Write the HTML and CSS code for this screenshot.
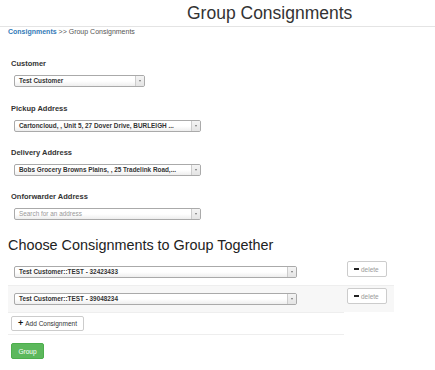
FILE: index.html
```html
<!DOCTYPE html>
<html>
<head>
<meta charset="utf-8">
<link rel="stylesheet" href="styles.css">
</head>
<body>
<div class="header"><h1 class="title">Group Consignments</h1></div>
<div class="crumbs"><a class="crumb-link">Consignments</a> &gt;&gt; Group Consignments</div>
<div class="main">
  <div class="field">
    <div class="label">Customer</div>
    <div class="sel w-short"><span class="sel-text">Test Customer</span><span class="sel-arrow"><i class="tri"></i></span></div>
  </div>
  <div class="field">
    <div class="label">Pickup Address</div>
    <div class="sel w-mid"><span class="sel-text">Cartoncloud, , Unit 5, 27 Dover Drive, BURLEIGH ...</span><span class="sel-arrow"><i class="tri"></i></span></div>
  </div>
  <div class="field">
    <div class="label">Delivery Address</div>
    <div class="sel w-mid"><span class="sel-text">Bobs Grocery Browns Plains, , 25 Tradelink Road,...</span><span class="sel-arrow"><i class="tri"></i></span></div>
  </div>
  <div class="field">
    <div class="label">Onforwarder Address</div>
    <div class="sel w-mid"><span class="sel-text placeholder">Search for an address</span><span class="sel-arrow"><i class="tri"></i></span></div>
  </div>
  <h2 class="heading">Choose Consignments to Group Together</h2>
  <div class="rows">
    <div class="row">
      <div class="cell-main"><div class="sel w-long"><span class="sel-text">Test Customer::TEST - 32423433</span><span class="sel-arrow"><i class="tri"></i></span></div></div>
      <div class="cell-act"><button class="btn btn-del"><i class="minus"></i>delete</button></div>
    </div>
    <div class="row striped">
      <div class="cell-main"><div class="sel w-long"><span class="sel-text">Test Customer::TEST - 39048234</span><span class="sel-arrow"><i class="tri"></i></span></div></div>
      <div class="cell-act"><button class="btn btn-del"><i class="minus"></i>delete</button></div>
    </div>
  </div>
  <div class="add-row"><button class="btn btn-add"><span class="plus">+</span>Add Consignment</button></div>
  <div class="actions"><button class="btn btn-group">Group</button></div>
</div>
</body>
</html>
```
FILE: styles.css
```css
* { box-sizing: border-box; }
body { margin: 0; font-family: "Liberation Sans", Arial, sans-serif; color: #333; background: #fff; }
.header { height: 27px; border-bottom: 1px solid #e4e4e4; padding-left: 187px; }
.title { margin: 0; font-size: 17.5px; font-weight: normal; line-height: 26px; color: #333; }
.crumbs { font-size: 7px; line-height: 9px; padding: 0 0 0 8px; margin-top: 0; color: #555; }
.crumb-link { color: #337ab7; font-weight: bold; }
.main { padding-left: 8px; }
.field { padding-left: 3px; margin-top: 16px; }
.field:first-child { margin-top: 23px; }
.field:nth-child(2) { margin-top: 17px; }
.label { font-size: 7.5px; font-weight: bold; line-height: 10px; margin-bottom: 6px; color: #333; }
.sel { display: flex; height: 12px; margin-left: 3px; border: 1px solid #aaa; border-radius: 2px; background: linear-gradient(#fff 0%, #fff 50%, #eee 100%); overflow: hidden; }
.w-short { width: 131px; }
.w-mid { width: 187px; }
.w-long { width: 283px; }
.sel-text { flex: 1; min-width: 0; padding-left: 4px; font-size: 6.4px; font-weight: bold; line-height: 10px; color: #333; white-space: nowrap; overflow: hidden; }
.placeholder { color: #999; font-weight: normal; }
.sel-arrow { width: 9px; border-left: 1px solid #ccc; background: linear-gradient(#f4f4f4, #e4e4e4); display: flex; align-items: center; justify-content: center; }
.tri { width: 0; height: 0; border-left: 1.5px solid transparent; border-right: 1.5px solid transparent; border-top: 2px solid #777; }
.heading { margin: 17px 0 0 0; font-size: 14.4px; font-weight: normal; line-height: 16px; color: #222; }
.rows { margin-top: 5px; width: 386px; }
.row { display: flex; height: 27px; }
.striped { background: #f7f7f7; border-top: 1px solid #eee; }
.cell-main { width: 336px; padding: 3px 3px 0 3px; }
.cell-main .sel { margin-top: 5px; }
.row.striped .cell-main .sel { margin-top: 4px; }
.cell-act { display: flex; align-items: flex-start; padding: 3px 3px 0 3px; }
.row.striped .cell-act { padding-top: 2px; }
.btn { font-family: "Liberation Sans", Arial, sans-serif; font-size: 6.5px; line-height: 13px; height: 15px; border-radius: 2px; border: 1px solid #ccc; background: #fff; color: #333; padding: 0 6px; display: inline-flex; align-items: center; cursor: pointer; }
.btn-del { color: #999; height: 16px; padding: 0 7px 0 6px; }
.minus { display: inline-block; width: 5px; height: 2px; background: #222; margin-right: 2px; }
.add-row { display: flex; width: 336px; padding: 3px; border-top: 1px solid #eee; border-bottom: 1px solid #eee; }
.plus { font-weight: bold; color: #111; font-size: 9px; margin-right: 2px; line-height: 13px; }
.actions { display: flex; padding: 8px 0 0 3px; }
.btn-group { height: 16px; background: #5cb85c; border-color: #4cae4c; color: #fff; padding: 0 6.5px; }
```
